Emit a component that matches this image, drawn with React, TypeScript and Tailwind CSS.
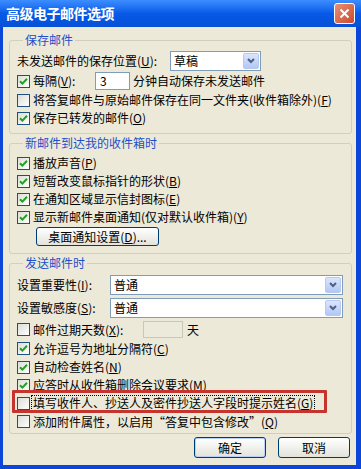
import React from 'react'

const font = { fontFamily: '"Noto Sans CJK SC", "Liberation Sans", sans-serif' }

function Check({ on }: { on?: boolean }) {
  return (
    <span className="w-[13px] h-[13px] shrink-0 border border-[#1c5180] bg-gradient-to-br from-[#dcdcd7] to-white flex items-center justify-center">
      {on && (
        <svg width="9" height="9" viewBox="0 0 9 9">
          <path d="M1 4.2 L3.4 6.6 L8 1.8" stroke="#21a121" strokeWidth="2" fill="none" />
        </svg>
      )}
    </span>
  )
}

function Select({ value, className }: { value: string; className: string }) {
  return (
    <div className={`h-[20px] border border-[#7f9db9] bg-white flex items-center ${className}`}>
      <span className="flex-1 pl-[3px] leading-none">{value}</span>
      <span className="w-[16px] h-[16px] mr-[1px] rounded-[2px] border border-[#b8c9f0] bg-gradient-to-b from-[#dbe6fd] to-[#b2c7f6] flex items-center justify-center">
        <svg width="8" height="6" viewBox="0 0 8 6">
          <path d="M1 1 L4 4 L7 1" stroke="#4d6185" strokeWidth="2" fill="none" />
        </svg>
      </span>
    </div>
  )
}

function Group({ title, children }: { title: string; children: React.ReactNode }) {
  return (
    <fieldset className="border border-[#d0d0bf] rounded-[3px] pl-[7px] pr-[4px]">
      <legend className="ml-[6px] px-[2px] text-[#1d4fc8] leading-[14px] whitespace-nowrap">{title}</legend>
      {children}
    </fieldset>
  )
}

function Row({ on, h, children }: { on?: boolean; h: string; children: React.ReactNode }) {
  return (
    <div className={`flex items-center gap-[3px] whitespace-nowrap ${h}`}>
      <Check on={on} />
      <span>{children}</span>
    </div>
  )
}

export default function App() {
  return (
    <div className="w-[361px] h-[469px] bg-[#0a47d8] flex flex-col overflow-hidden text-[12px] text-black" style={font}>
      <div className="h-[27px] shrink-0 flex items-center pl-[6px] pr-[6px] bg-gradient-to-b from-[#3d8eff] via-[#0759e8] to-[#0650d6]">
        <span className="text-white font-bold text-[14px] tracking-[-0.5px]">高级电子邮件选项</span>
        <span className="ml-auto w-[21px] h-[21px] rounded-[3px] border border-white bg-gradient-to-br from-[#e89075] to-[#c9482a] flex items-center justify-center">
          <svg width="11" height="11" viewBox="0 0 11 11">
            <path d="M1.5 1.5 L9.5 9.5 M9.5 1.5 L1.5 9.5" stroke="white" strokeWidth="2" />
          </svg>
        </span>
      </div>

      <div className="flex-1 ml-[3px] mr-[5px] mb-[4px] bg-[#ece9d8] pt-[6px] pl-[6px] pr-[4px] flex flex-col">
        <Group title="保存邮件">
          <div className="pt-[4px] pb-[6px]">
            <div className="h-[20px] flex items-center whitespace-nowrap">
              <span className="w-[153px]">未发送邮件的保存位置(<u>U</u>):</span>
              <Select value="草稿" className="w-[91px]" />
            </div>
            <div className="h-[20px] flex items-center gap-[3px] whitespace-nowrap">
              <Check on />
              <span className="w-[59px]">每隔(<u>V</u>):</span>
              <span className="w-[35px] h-[18px] border border-[#7f9db9] bg-white pl-[4px] leading-[16px]">3</span>
              <span>分钟自动保存未发送邮件</span>
            </div>
            <Row h="h-[18px]">将答复邮件与原始邮件保存在同一文件夹(收件箱除外)(<u>F</u>)</Row>
            <Row on h="h-[18px]">保存已转发的邮件(<u>O</u>)</Row>
          </div>
        </Group>

        <div className="mt-[2px]">
          <Group title="新邮件到达我的收件箱时">
            <div className="pt-[4px] pb-[7px]">
              <Row on h="h-[18px]">播放声音(<u>P</u>)</Row>
              <Row on h="h-[18px]">短暂改变鼠标指针的形状(<u>B</u>)</Row>
              <Row on h="h-[18px]">在通知区域显示信封图标(<u>E</u>)</Row>
              <Row on h="h-[18px]">显示新邮件桌面通知(仅对默认收件箱)(<u>Y</u>)</Row>
              <div className="mt-[1px] ml-[19px] w-[123px] h-[19px] rounded-[3px] border border-[#003c74] bg-gradient-to-b from-white to-[#e3e3db] flex items-center justify-center whitespace-nowrap">
                桌面通知设置(<u>D</u>)...
              </div>
            </div>
          </Group>
        </div>

        <div className="mt-[2px]">
          <Group title="发送邮件时">
            <div className="pt-[4px] pb-[2px]">
              <div className="h-[21px] flex items-center whitespace-nowrap">
                <span className="w-[93px]">设置重要性(<u>I</u>):</span>
                <Select value="普通" className="w-[233px]" />
              </div>
              <div className="mt-[2px] h-[21px] flex items-center whitespace-nowrap">
                <span className="w-[93px]">设置敏感度(<u>S</u>):</span>
                <Select value="普通" className="w-[233px]" />
              </div>
              <div className="mt-[2px] h-[19px] flex items-center gap-[3px] whitespace-nowrap">
                <Check />
                <span className="w-[107px]">邮件过期天数(<u>X</u>):</span>
                <span className="w-[40px] h-[17px] border border-[#c9c7ba] bg-[#ebeadb]" />
                <span className="ml-[1px]">天</span>
              </div>
              <Row on h="h-[19px]">允许逗号为地址分隔符(<u>C</u>)</Row>
              <Row on h="h-[18px]">自动检查姓名(<u>N</u>)</Row>
              <Row on h="h-[18px]">应答时从收件箱删除会议要求(<u>M</u>)</Row>
              <div className="relative h-[18px] flex items-center gap-[1px] whitespace-nowrap">
                <Check />
                <span className="border border-dotted border-black px-[1px] leading-[14px]">
                  填写收件人、抄送人及密件抄送人字段时提示姓名(<u>G</u>)
                </span>
                <span className="absolute left-[-5px] top-[-4px] w-[315px] h-[23px] border-[3px] border-[#c7342d] rounded-[1px]" />
              </div>
              <Row h="h-[19px]">添加附件属性，以启用“答复中包含修改”(<u>Q</u>)</Row>
            </div>
          </Group>
        </div>

        <div className="mt-[3px] flex justify-end gap-[12px] pr-[2px]">
          <div className="w-[72px] h-[21px] rounded-[3px] border border-[#003c74] bg-gradient-to-b from-white to-[#e3e3db] shadow-[inset_0_0_0_1px_#b9d1fa] flex items-center justify-center">
            确定
          </div>
          <div className="w-[72px] h-[21px] rounded-[3px] border border-[#003c74] bg-gradient-to-b from-white to-[#e3e3db] flex items-center justify-center">
            取消
          </div>
        </div>
      </div>
    </div>
  )
}
